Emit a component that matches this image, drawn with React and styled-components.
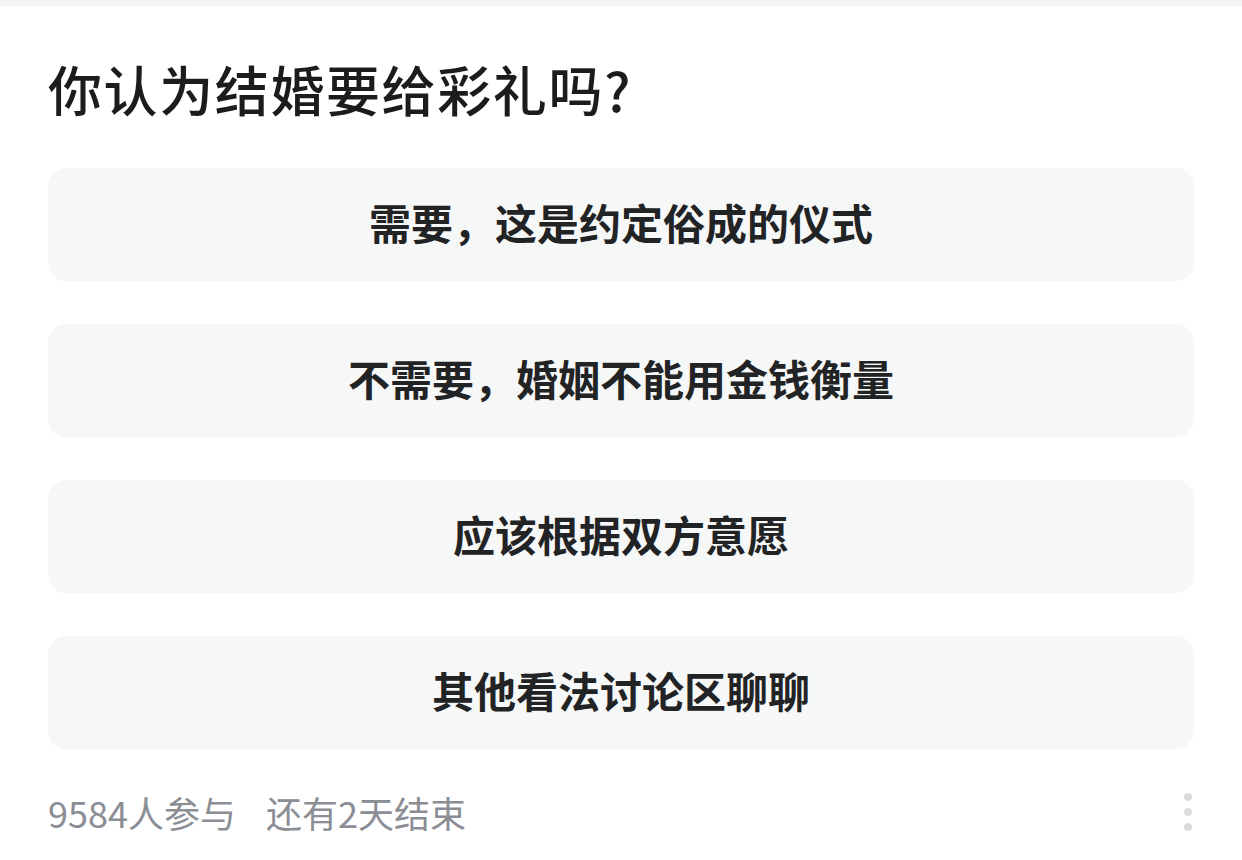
import React from 'react';
import styled, { createGlobalStyle } from 'styled-components';

const GlobalStyle = createGlobalStyle`
  html, body {
    margin: 0;
    padding: 0;
    background: #ffffff;
    font-family: "Noto Sans CJK SC", "Noto Sans", sans-serif;
  }
`;

const TopStrip = styled.div`
  height: 6px;
  background: #f3f3f3;
`;

const Card = styled.section`
  padding: 48px 48px 0;
`;

const Question = styled.h1`
  margin: 0 0 44px;
  font-size: 54px;
  line-height: 70px;
  font-weight: 500;
  color: #1b1c1e;
  letter-spacing: 1.6px;
`;

const Options = styled.div`
  display: flex;
  flex-direction: column;
  gap: 43px;
`;

const Option = styled.button`
  display: flex;
  align-items: center;
  justify-content: center;
  box-sizing: border-box;
  height: 113px;
  padding: 0 0 6px;
  border: none;
  border-radius: 18px;
  background: #f6f7f7;
  font-family: inherit;
  font-size: 42px;
  font-weight: 600;
  color: #222325;
  cursor: pointer;
`;

const Footer = styled.div`
  display: flex;
  align-items: center;
  justify-content: space-between;
  margin-top: 38px;
  height: 50px;
`;

const Meta = styled.div`
  display: flex;
  gap: 30px;
  font-size: 36px;
  line-height: 50px;
  color: #8b8e94;
`;

const MoreButton = styled.span`
  display: flex;
  flex-direction: column;
  gap: 7px;
  margin-right: 2px;
`;

const Dot = styled.i`
  width: 8px;
  height: 8px;
  border-radius: 50%;
  background: #dcdcdc;
`;

const options = [
  '需要，这是约定俗成的仪式',
  '不需要，婚姻不能用金钱衡量',
  '应该根据双方意愿',
  '其他看法讨论区聊聊',
];

export default function App() {
  return (
    <>
      <GlobalStyle />
      <TopStrip />
      <Card>
        <Question>你认为结婚要给彩礼吗?</Question>
        <Options>
          {options.map(o => (
            <Option key={o}>{o}</Option>
          ))}
        </Options>
        <Footer>
          <Meta>
            <span>9584人参与</span>
            <span>还有2天结束</span>
          </Meta>
          <MoreButton>
            <Dot />
            <Dot />
            <Dot />
          </MoreButton>
        </Footer>
      </Card>
    </>
  );
}
